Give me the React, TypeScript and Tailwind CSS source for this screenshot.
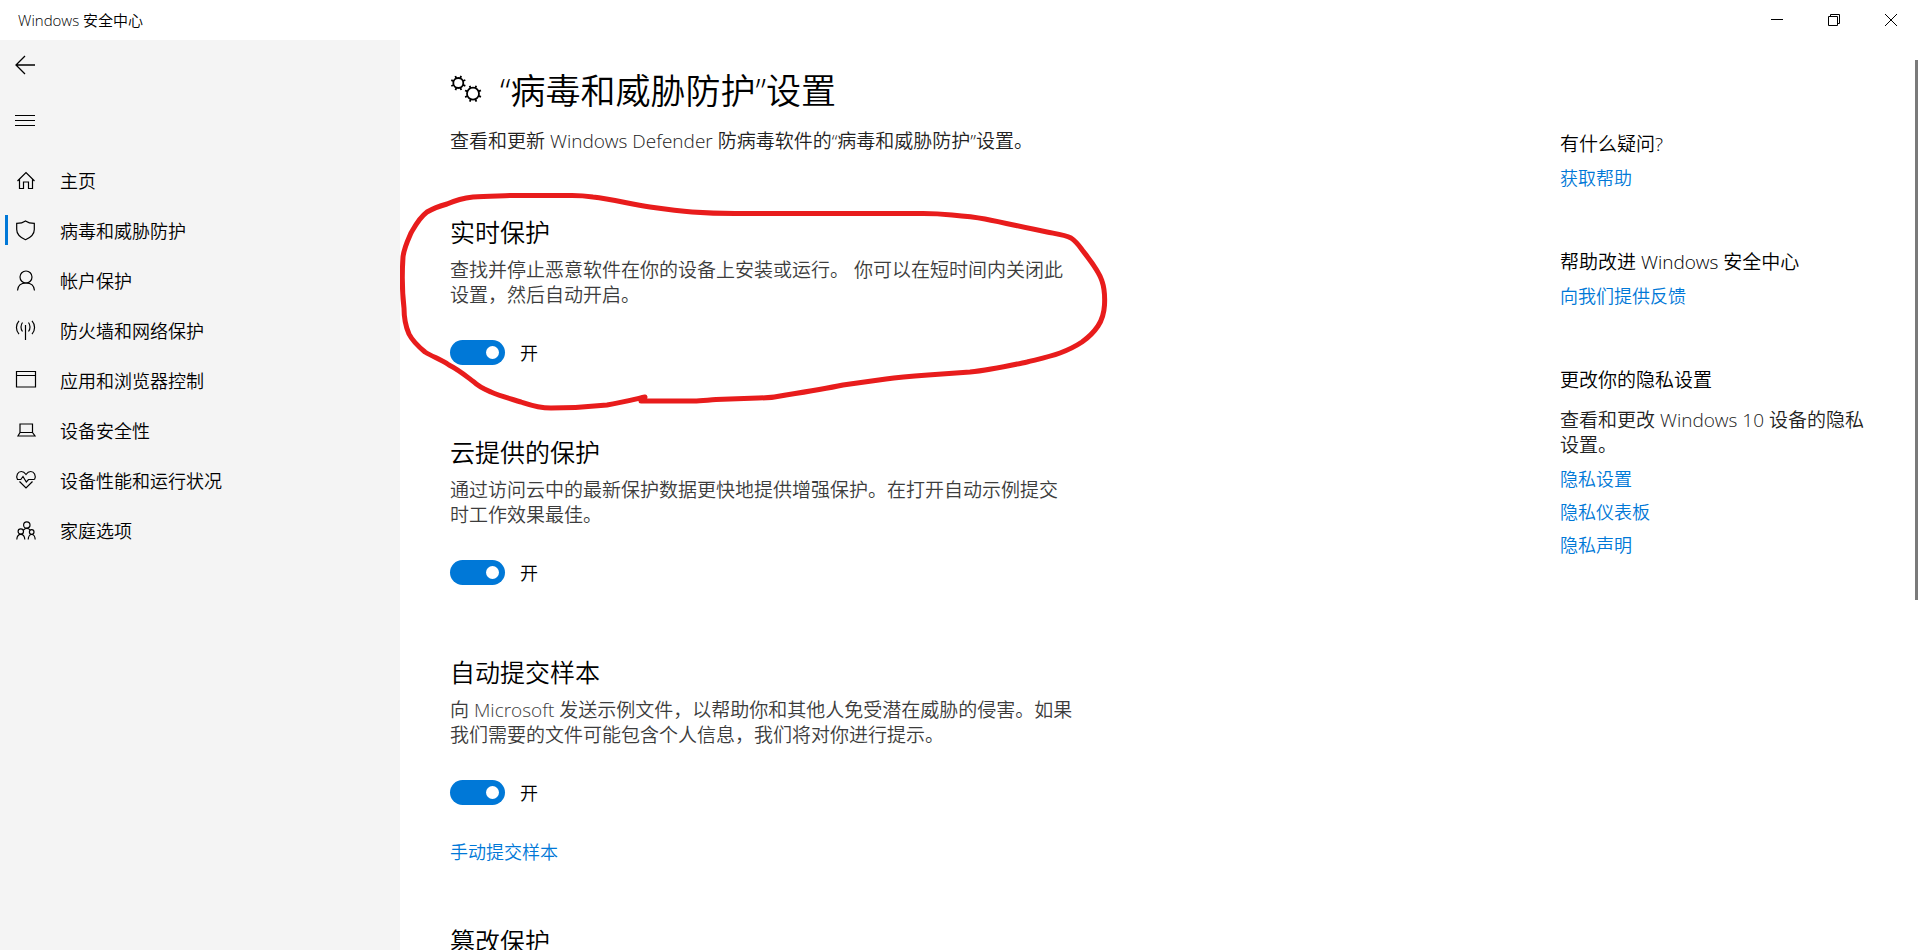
import { useState, type ReactNode } from "react";

interface NavItem {
  label: string;
  icon: ReactNode;
  active?: boolean;
}

interface Setting {
  id: string;
  title: string;
  body: string;
  link?: string;
}

const NAV_ITEMS: NavItem[] = [
  {
    label: "主页",
    icon: <path d="M1.5 11 10 2.5l8.5 8.5M3.5 9.5v9h4v-6.5h5v6.5h4v-9" />,
  },
  {
    label: "病毒和威胁防护",
    active: true,
    icon: (
      <path d="M9.5 1C7 2.8 4 3.4.7 3.4v6c0 4.800 3.600 8 8.800 10.300 5.200-2.300 8.800-5.500 8.800-10.300v-6C15 3.400 12 2.800 9.500 1Z" />
    ),
  },
  {
    label: "帐户保护",
    icon: (
      <>
        <circle cx="10" cy="7" r="6" />
        <path d="M1.500 20.500c.3-4.500 3.500-7.500 8.500-7.500s8.200 3 8.500 7.500" />
      </>
    ),
  },
  {
    label: "防火墙和网络保护",
    icon: (
      <>
        <path d="M9.500 5v15" />
        <path d="M6.500 2.500c-2 2.500-2 6.500 0 9M12.500 2.500c2 2.500 2 6.500 0 9" />
        <path d="M3 .8C-.4 4.500-.4 10.500 3 14.200M16 .8c3.400 3.700 3.400 9.700 0 13.400" />
      </>
    ),
  },
  {
    label: "应用和浏览器控制",
    icon: <path d="M.5 1.500h19v15.500H.5zM.5 5.500h19" />,
  },
  {
    label: "设备安全性",
    icon: <path d="M4 4h12.500v8.500H4zM4 12.500 2 16h17l-2.500-3.500" />,
  },
  {
    label: "设备性能和运行状况",
    icon: (
      <>
        <path d="M1.500 9.500C-.5 5.500 2 1.500 5.300 1.500 7.500 1.500 9 3 10 4.500 11 3 12.500 1.500 14.700 1.500 18 1.500 20.500 5.500 18.500 9.500" />
        <path d="M1 9.500h3.800l2.200-3 3.300 5.500 2.200-2.500h6M3.500 11.500 10 18l6.500-6.500" />
      </>
    ),
  },
  {
    label: "家庭选项",
    icon: (
      <>
        <circle cx="10.800" cy="5" r="3.200" />
        <circle cx="4.800" cy="11.500" r="2.700" />
        <circle cx="15.700" cy="12" r="2.300" />
        <path d="M.8 19.500c.2-3.300 1.700-5.200 4-5.200s3.800 1.900 4 5.200M12.200 19.500c.2-3 1.500-5 3.500-5s3.300 2 3.500 5M7.500 10c.9-1.100 2-1.700 3.300-1.700s2.600.8 3.300 1.700" />
      </>
    ),
  },
];

const SETTINGS: Setting[] = [
  {
    id: "realtime",
    title: "实时保护",
    body: "查找并停止恶意软件在你的设备上安装或运行。 你可以在短时间内关闭此\n设置，然后自动开启。",
  },
  {
    id: "cloud",
    title: "云提供的保护",
    body: "通过访问云中的最新保护数据更快地提供增强保护。在打开自动示例提交\n时工作效果最佳。",
  },
  {
    id: "samples",
    title: "自动提交样本",
    body: "向 Microsoft 发送示例文件，以帮助你和其他人免受潜在威胁的侵害。如果\n我们需要的文件可能包含个人信息，我们将对你进行提示。",
    link: "手动提交样本",
  },
];

function Icon({ children }: { children: ReactNode }) {
  return (
    <svg
      viewBox="0 0 20 21"
      className="h-[21px] w-5 shrink-0 overflow-visible"
      fill="none"
      stroke="currentColor"
      strokeWidth="1.2"
      aria-hidden="true"
    >
      {children}
    </svg>
  );
}

function Gear({ x, y, r }: { x: number; y: number; r: number }) {
  return (
    <g transform={`translate(${x} ${y})`}>
      <circle r={r} />
      {[22, 67, 112, 157, 202, 247, 292, 337].map((angle) => (
        <path key={angle} d={`M0 ${-r}V${-r - 2.6}`} transform={`rotate(${angle})`} />
      ))}
    </g>
  );
}

function Toggle({ id }: { id: string }) {
  const [on, setOn] = useState(true);

  return (
    <label htmlFor={id} className="flex h-[25px] w-fit items-center gap-[15px]">
      <span className="relative h-[25px] w-[55px]">
        <input
          id={id}
          type="checkbox"
          role="switch"
          checked={on}
          onChange={(e) => setOn(e.target.checked)}
          className="peer block h-[25px] w-[55px] appearance-none rounded-full bg-[#8a8a8a] checked:bg-[#0078d7]"
        />
        <span className="pointer-events-none absolute top-[6px] left-[7px] h-[13px] w-[13px] rounded-full bg-white peer-checked:left-[36px]" />
      </span>
      <span className="pt-0.5 text-[18px] leading-[25px]">{on ? "开" : "关"}</span>
    </label>
  );
}

// Freehand pen loop drawn around the first setting
function PenMark() {
  return (
    <svg
      viewBox="400 190 710 222"
      className="pointer-events-none absolute -top-[27px] -left-[50px] h-[222px] w-[710px]"
      fill="none"
      stroke="#e81c1c"
      strokeWidth="5"
      strokeLinecap="round"
      strokeLinejoin="round"
      aria-hidden="true"
    >
      <path d="M645 397C632 400 620 403 607 405 588 407 568 408 551 408 538 408 530 405 521 402 508 398 500 396 491 392 484 389 479 387 474 382 466 376 459 370 449 365 440 359 433 357 425 352 419 347 413 342 409 334 405 325 404 316 404 308 402 291 402 272 403 257 404 248 407 242 411 233 415 226 419 218 427 212 434 208 440 206 447 204 456 200 464 198 473 197 486 196 498 196 510 195.500H572C580 195.500 586 196 593 197 612 199 630 204 650 207 664 209 678 211 692 212 706 213 720 213.500 735 213.500H923C933 213.500 942 214 952 215 964 216 974 217 985 219 1006 223 1026 228 1047 232 1057 234 1065 235 1071 238 1077 242 1080 247 1083 251 1090 260 1099 271 1102 281 1105 290 1105 296 1104.500 305 1104 314 1102 320 1098 326 1094 332 1089 337 1082 342 1076 346 1068 350 1060 353 1049 357 1039 359 1027 362 1008 366 990 370 970 372 956 373 942 374 928 375 914 376 900 377 886 379 872 381 857 383 843 385 824 389 805 392 786 395 777 397 768 398 758 398 744 398.500 730 399 716 399.500 708 400 701 401 694 401H641" />
    </svg>
  );
}

function SideLink({ children }: { children: ReactNode }) {
  return (
    <a href="#" className="block w-fit text-[18px] leading-[25px] text-[#0078d7]">
      {children}
    </a>
  );
}

function TitleBar() {
  return (
    <header className="flex h-10 shrink-0 items-center justify-between bg-white pr-px pl-[18px]">
      <span className="text-[15px] leading-5">Windows 安全中心</span>
      <div className="flex">
        <button type="button" aria-label="最小化" className="flex h-10 w-[57px] items-center justify-center">
          <svg viewBox="0 0 12 12" className="h-3 w-3" fill="none" stroke="currentColor" aria-hidden="true">
            <path d="M0 5.500h12" />
          </svg>
        </button>
        <button type="button" aria-label="还原" className="flex h-10 w-[57px] items-center justify-center">
          <svg viewBox="0 0 12 12" className="h-3 w-3" fill="none" stroke="currentColor" aria-hidden="true">
            <path d="M.5 2.500h9v9h-9zM2.500 2.500v-2h9v9h-2" />
          </svg>
        </button>
        <button type="button" aria-label="关闭" className="flex h-10 w-[57px] items-center justify-center">
          <svg viewBox="0 0 12 12" className="h-3 w-3" fill="none" stroke="currentColor" aria-hidden="true">
            <path d="M0 0l12 12M12 0 0 12" />
          </svg>
        </button>
      </div>
    </header>
  );
}

function Sidebar() {
  return (
    <aside className="w-[400px] shrink-0 bg-[#f4f4f4]">
      <button type="button" aria-label="返回" className="flex h-[50px] w-[50px] items-center justify-center">
        <svg viewBox="0 0 20 20" className="h-5 w-5" fill="none" stroke="currentColor" strokeWidth="1.3" aria-hidden="true">
          <path d="M20 10H1M10 1 1 10l9 9" />
        </svg>
      </button>
      <button type="button" aria-label="菜单" className="mt-[6px] flex h-[50px] w-[50px] items-center justify-center">
        <svg viewBox="0 0 20 12" className="h-3 w-5" fill="none" stroke="currentColor" aria-hidden="true">
          <path d="M0 .5h20M0 5.500h20M0 10.500h20" />
        </svg>
      </button>
      <nav className="mt-[9px]">
        {NAV_ITEMS.map((item) => (
          <a key={item.label} href="#" className="flex h-[50px] items-center pl-[5px]">
            <span className={item.active ? "h-[30px] w-[3px] bg-[#0078d7]" : "h-[30px] w-[3px]"} />
            <span className="ml-2 flex w-[44px]">
              <Icon>{item.icon}</Icon>
            </span>
            <span className="pt-0.5 text-[18px] leading-[25px]">{item.label}</span>
          </a>
        ))}
      </nav>
    </aside>
  );
}

function HelpPanel() {
  return (
    <aside className="w-[360px] shrink-0 pt-[92px] pr-[50px] text-[19px] leading-[25px]">
      <section>
        <h3>有什么疑问?</h3>
        <div className="mt-[9px]">
          <SideLink>获取帮助</SideLink>
        </div>
      </section>
      <section className="mt-[59px]">
        <h3>帮助改进 Windows 安全中心</h3>
        <div className="mt-[9px]">
          <SideLink>向我们提供反馈</SideLink>
        </div>
      </section>
      <section className="mt-[59px]">
        <h3>更改你的隐私设置</h3>
        <p className="mt-[15px] text-[#222]">查看和更改 Windows 10 设备的隐私设置。</p>
        <div className="mt-[9px] flex flex-col gap-2">
          <SideLink>隐私设置</SideLink>
          <SideLink>隐私仪表板</SideLink>
          <SideLink>隐私声明</SideLink>
        </div>
      </section>
    </aside>
  );
}

function App() {
  return (
    <div className="flex h-screen flex-col overflow-hidden bg-white font-['Open_Sans','Noto_Sans_CJK_SC',sans-serif] font-[350] text-black">
      <TitleBar />
      <div className="flex min-h-0 flex-1">
        <Sidebar />
        <main className="min-w-0 flex-1 overflow-hidden pt-[26px] pl-[50px]">
          <div className="flex items-center gap-[17px]">
            <svg viewBox="0 0 33 28" className="h-7 w-[33px] overflow-visible" fill="none" stroke="currentColor" strokeWidth="1.8" aria-hidden="true">
              <Gear x={8.3} y={6} r={5} />
              <Gear x={23} y={16.7} r={6} />
            </svg>
            <h1 className="text-[35px] leading-[50px]">“病毒和威胁防护”设置</h1>
          </div>
          <p className="mt-[13px] text-[19px] leading-[25px] text-[#222]">
            查看和更新 Windows Defender 防病毒软件的“病毒和威胁防护”设置。
          </p>

          {/* Settings */}
          <div className="mt-[63px]">
            {SETTINGS.map((setting) => (
              <section key={setting.id} className={setting.link ? "relative mb-[61px]" : "relative mb-[72px]"}>
                <h2 className="text-[25px] leading-[30px]">{setting.title}</h2>
                <p className="mt-[11px] mb-[32px] whitespace-pre text-[19px] leading-[25px] text-[#3c3c3c]">
                  {setting.body}
                </p>
                <Toggle id={setting.id} />
                {setting.link && (
                  <a href="#" className="mt-[35px] block w-fit text-[18px] leading-[25px] text-[#0078d7]">
                    {setting.link}
                  </a>
                )}
                {setting.id === "realtime" && <PenMark />}
              </section>
            ))}
            <section>
              <h2 className="text-[25px] leading-[30px]">篡改保护</h2>
            </section>
          </div>
        </main>
        <HelpPanel />
        {/* Scroll thumb */}
        <div className="absolute top-[60px] right-[2px] h-[540px] w-[3px] bg-[#7a7a7a]" />
      </div>
    </div>
  );
}

export default App;
